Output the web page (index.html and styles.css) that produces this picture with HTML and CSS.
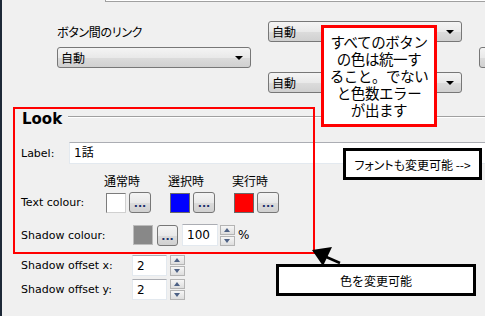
FILE: index.html
```html
<!DOCTYPE html>
<html lang="ja">
<head>
  <meta charset="UTF-8" />
  <meta name="viewport" content="width=device-width, initial-scale=1.0"/>
  <title>Button settings</title>
  <link rel="stylesheet" href="styles.css">
</head>
<body>
  <div class="page">
    <!-- bottom edge of the panel above -->
    <div class="topbox"></div>

    <!-- link settings -->
    <div class="top">
      <div class="col col-left">
        <div class="caption">ボタン間のリンク</div>
        <div class="select">自動</div>
      </div>
      <div class="col col-right">
        <div class="select">自動</div>
        <div class="select second">自動</div>
      </div>
      <div class="col col-edge">
        <div class="edge-btn"></div>
      </div>
    </div>

    <!-- Look group -->
    <section class="look">
      <div class="legend"><span>Look</span><i class="rule"></i></div>

      <div class="row row-label">
        <label class="lbl w48">Label:</label>
        <div class="input wide">1話</div>
      </div>

      <div class="row heads">
        <span>通常時</span>
        <span>選択時</span>
        <span>実行時</span>
      </div>

      <div class="row row-text">
        <label class="lbl w85">Text colour:</label>
        <div class="group"><span class="swatch white"></span><button class="dots">...</button></div>
        <div class="group"><span class="swatch blue"></span><button class="dots">...</button></div>
        <div class="group"><span class="swatch red"></span><button class="dots">...</button></div>
      </div>

      <div class="row row-shadow">
        <label class="lbl w112">Shadow colour:</label>
        <span class="swatch gray"></span>
        <button class="dots">...</button>
        <div class="input num pct">100</div>
        <div class="spin"><span class="up"></span><span class="down"></span></div>
        <span class="unit">%</span>
      </div>

      <div class="row row-off">
        <label class="lbl w111">Shadow offset x:</label>
        <div class="input num off">2</div>
        <div class="spin"><span class="up"></span><span class="down"></span></div>
      </div>

      <div class="row row-off last">
        <label class="lbl w111">Shadow offset y:</label>
        <div class="input num off">2</div>
        <div class="spin"><span class="up"></span><span class="down"></span></div>
      </div>
    </section>

    <!-- annotations drawn over the screenshot -->
    <div class="mark"></div>
    <div class="note">
      <div>すべてのボタン</div>
      <div>の色は統一す</div>
      <div>ること。でない</div>
      <div>と色数エラー</div>
      <div>が出ます</div>
    </div>
    <div class="callout font-call">フォントも変更可能 --&gt;</div>
    <div class="callout color-call">色を変更可能</div>
    <svg class="arrow" width="50" height="30" viewBox="305 242 50 30">
      <line x1="340" y1="263" x2="324" y2="256" stroke="#000" stroke-width="2.5"/>
      <polygon points="312,250 332,247 323,266" fill="#000"/>
    </svg>
  </div>
</body>
</html>
```

FILE: styles.css
```css
html, body {
  margin: 0;
  padding: 0;
}

body {
  font-family: "DejaVu Sans", "Noto Sans CJK JP", sans-serif;
  font-size: 11px;
  color: #000;
  background: #f0f0f0;
}

.page {
  position: relative;
  width: 485px;
  height: 316px;
  overflow: hidden;
  box-sizing: border-box;
  border-left: 2px solid #1d2837;
}

.topbox {
  height: 1px;
  margin-left: 103px;
  background: #fff;
  border-left: 1px solid #a0a0a0;
  border-bottom: 1px solid #a0a0a0;
}

/* top selects */
.top {
  display: flex;
  padding-left: 55px;
  height: 91px;
}

.col {
  flex-shrink: 0;
}

.col-left {
  width: 194px;
  padding-top: 22px;
}

.caption {
  font-family: "Noto Sans CJK JP", sans-serif;
  font-size: 12px;
  line-height: 16px;
  font-feature-settings: "palt";
  letter-spacing: -0.3px;
  margin-bottom: 7px;
}

.col-right {
  width: 194px;
  margin-left: 17px;
  padding-top: 19px;
}

.col-edge {
  margin-left: 17px;
  padding-top: 45px;
}

.select {
  position: relative;
  height: 21px;
  box-sizing: border-box;
  border: 1px solid #777;
  border-radius: 3px;
  background: linear-gradient(#f4f4f4, #e9e9e9 50%, #dcdcdc 51%, #d0d0d0);
  font-family: "Noto Sans CJK JP", sans-serif;
  font-size: 12px;
  line-height: 19px;
  padding-left: 3px;
}

.select::after {
  content: "";
  position: absolute;
  right: 7px;
  top: 8px;
  border-left: 4px solid transparent;
  border-right: 4px solid transparent;
  border-top: 4px solid #000;
}

.select.second {
  margin-top: 30px;
}

.edge-btn {
  width: 20px;
  height: 21px;
  box-sizing: border-box;
  border: 1px solid #777;
  border-radius: 3px;
  background: linear-gradient(#f4f4f4, #e9e9e9 50%, #dcdcdc 51%, #d0d0d0);
}

/* Look group */
.look {
  padding-left: 19px;
  margin-top: 17px;
}

.legend {
  display: flex;
  align-items: flex-start;
  height: 18px;
}

.legend span {
  font-size: 15px;
  font-weight: bold;
  line-height: 18px;
  margin-left: 1px;
}

.rule {
  flex: 1;
  margin-top: 6px;
  margin-left: 6px;
  border-top: 1px solid #a0a0a0;
  border-bottom: 1px solid #fff;
}

.row {
  display: flex;
  align-items: center;
}

.lbl {
  flex-shrink: 0;
}

.w48 { width: 48px; }
.w85 { width: 85px; }
.w111 { width: 111px; }
.w112 { width: 112px; }

.input {
  height: 22px;
  box-sizing: border-box;
  background: #fff;
  border: 1px solid #e3e9ef;
  border-top-color: #abadb3;
  padding-left: 4px;
  line-height: 20px;
  flex-shrink: 0;
}

.row-label {
  margin-top: 14px;
}

.input.wide {
  width: 430px;
  font-size: 12px;
}

.heads {
  margin-top: 9px;
  height: 15px;
  padding-left: 85px;
  font-family: "Noto Sans CJK JP", sans-serif;
  font-size: 12px;
  line-height: 15px;
}

.heads span {
  width: 64px;
  margin-left: -2px;
  margin-right: 2px;
}

.row-text {
  margin-top: 4px;
  height: 21px;
}

.group {
  display: flex;
  align-items: center;
  width: 64px;
  flex-shrink: 0;
}

.swatch {
  display: block;
  width: 20px;
  height: 20px;
  box-sizing: border-box;
  border: 1px solid #d0d0d0;
  border-top-color: #7c7c7c;
  border-left-color: #7c7c7c;
  flex-shrink: 0;
}

.swatch.white { background: #fff; }
.swatch.blue { background: #0000ff; border-color: #6a6a6a; }
.swatch.red { background: #ff0000; border-color: #6a6a6a; }
.swatch.gray { background: #888; border-color: #bcbcbc; }

.dots {
  width: 22px;
  height: 21px;
  margin: 0 0 0 3px;
  padding: 0;
  box-sizing: border-box;
  border: 1px solid #777;
  border-radius: 3px;
  background: linear-gradient(#f4f4f4, #e9e9e9 50%, #dcdcdc 51%, #d0d0d0);
  font-family: "DejaVu Sans", sans-serif;
  font-size: 11px;
  font-weight: bold;
  color: #1b2f6b;
  line-height: 22px;
  flex-shrink: 0;
}

.row-shadow {
  margin-top: 11px;
  height: 22px;
}

.row-shadow .dots {
  margin-left: 4px;
  width: 21px;
}

.input.num {
  font-size: 12px;
}

.input.pct {
  width: 36px;
  margin-left: 4px;
}

.spin {
  display: flex;
  flex-direction: column;
  width: 15px;
  margin-left: 2px;
  flex-shrink: 0;
}

.spin span {
  position: relative;
  height: 10px;
  box-sizing: border-box;
  border: 1px solid #b4b4b4;
  background: linear-gradient(#f6f6f6, #dedede);
}

.spin span + span {
  margin-top: 1px;
}

.spin .up::after,
.spin .down::after {
  content: "";
  position: absolute;
  left: 3px;
  top: 2px;
  border-left: 3.5px solid transparent;
  border-right: 3.5px solid transparent;
}

.spin .up::after {
  border-bottom: 4px solid #4d6185;
}

.spin .down::after {
  border-top: 4px solid #4d6185;
}

.unit {
  margin-left: 3px;
  font-size: 12px;
}

.row-off {
  margin-top: 9px;
  height: 21px;
}

.row-off.last {
  margin-top: 3px;
}

.input.off {
  width: 35px;
  height: 21px;
}

.row-off .spin {
  margin-left: 3px;
}

/* annotations */
.mark {
  position: absolute;
  left: 11px;
  top: 107px;
  width: 302px;
  height: 147px;
  box-sizing: border-box;
  border: 2px solid #ff0000;
}

.note {
  position: absolute;
  left: 319px;
  top: 25px;
  width: 116px;
  height: 102px;
  box-sizing: border-box;
  border: 3px solid #ff0000;
  background: #fff;
  padding-top: 5px;
  text-align: center;
  font-family: "Noto Sans CJK JP", sans-serif;
  font-size: 14.5px;
  letter-spacing: -0.4px;
}

.note div {
  height: 17px;
  line-height: 17px;
}

.callout {
  position: absolute;
  height: 32px;
  box-sizing: border-box;
  border: 3px solid #000;
  background: #fff;
  display: flex;
  align-items: center;
  justify-content: center;
  font-family: "Noto Sans CJK JP", sans-serif;
  font-size: 12px;
}

.font-call {
  left: 341px;
  top: 148px;
  width: 139px;
  font-feature-settings: "palt";
}

.color-call {
  left: 274px;
  top: 264px;
  width: 200px;
}

.arrow {
  position: absolute;
  left: 303px;
  top: 242px;
}
```
